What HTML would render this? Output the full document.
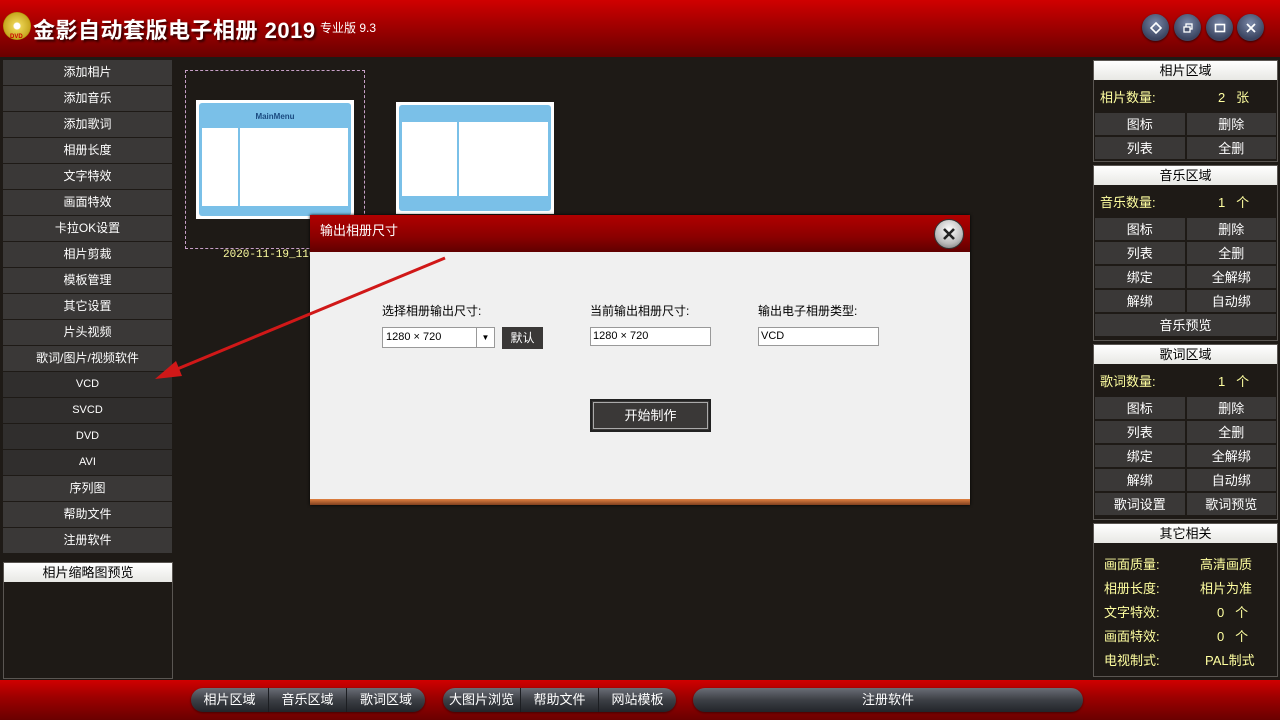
<!DOCTYPE html>
<html><head><meta charset="utf-8">
<style>
*{margin:0;padding:0;box-sizing:border-box}
body{width:1280px;height:720px;background:#1e1a16;position:relative;overflow:hidden;font-family:"Liberation Sans","Noto Sans CJK SC","WenQuanYi Zen Hei",sans-serif;font-size:13px;color:#fff}
.a{position:absolute}
#top{left:0;top:0;width:1280px;height:57px;background:linear-gradient(#d00000 0%,#a60000 40%,#6a0000 100%)}
.tb{width:27px;height:27px;border-radius:50%;background:radial-gradient(circle at 50% 35%,#7a88a8,#3a4460 70%);top:14px;box-shadow:0 1px 2px #300;display:flex;align-items:center;justify-content:center}
.menu{left:3px;width:169px;height:25px;background:#3a3837;text-align:center;line-height:25px;font-size:12px}
.menu.d{background:#302e2d}
.sec{left:1093px;width:185px;border:1px solid #5a5652}
.hd{height:19px;background:linear-gradient(#fff,#e8e8e4);color:#000;text-align:center;line-height:19px;font-size:13px}
.row{height:24px;display:flex}
.row div{flex:1;background:#3a3837;text-align:center;line-height:23px;border:1px solid #1e1a16}
.cnt{color:#ffffa0;height:24px;line-height:24px;position:relative}
.y{color:#ffffa0}
.bb{top:688px;height:24px;border-radius:12px;background:linear-gradient(#6a6e76,#3c3f45 50%,#22252a);display:flex;box-shadow:0 1px 2px #400}
.bb div{text-align:center;line-height:24px;border-right:1px solid #1c1e22;font-size:13px}
.bb div:last-child{border-right:none}
</style></head><body>
<div id="top" class="a"></div>
<div class="a" style="left:3px;top:12px;width:28px;height:28px;border-radius:50%;background:radial-gradient(circle,#fff 0 3px,#e8d050 4px,#c8a820 13px,#a88800 14px)"></div>
<div class="a" style="left:10px;top:34px;font-size:6px;color:#c00;font-weight:bold">DVD</div>
<div class="a" style="left:33px;top:13px;font-size:22px;font-weight:bold;color:#fff;text-shadow:2px 2px 2px #300;letter-spacing:0.5px">金影自动套版电子相册 2019</div>
<div class="a" style="left:320px;top:19px;font-size:12px;color:#fff">专业版 9.3</div>
<div class="a tb" style="left:1142px"><svg width="14" height="14"><path d="M7 2L12 7L7 12L2 7Z" fill="none" stroke="#fff" stroke-width="1.6"/></svg></div>
<div class="a tb" style="left:1174px"><svg width="14" height="14"><rect x="5" y="3" width="6" height="5" fill="none" stroke="#fff" stroke-width="1.3"/><rect x="3" y="6" width="6" height="5" fill="#4a5470" stroke="#fff" stroke-width="1.3"/></svg></div>
<div class="a tb" style="left:1206px"><svg width="14" height="14"><rect x="2.5" y="3.5" width="9" height="7" fill="none" stroke="#fff" stroke-width="1.6"/></svg></div>
<div class="a tb" style="left:1237px"><svg width="14" height="14"><path d="M3 3L11 11M11 3L3 11" stroke="#fff" stroke-width="1.8"/></svg></div>

<div class="a menu" style="top:60px">添加相片</div>
<div class="a menu" style="top:86px">添加音乐</div>
<div class="a menu" style="top:112px">添加歌词</div>
<div class="a menu" style="top:138px">相册长度</div>
<div class="a menu" style="top:164px">文字特效</div>
<div class="a menu" style="top:190px">画面特效</div>
<div class="a menu" style="top:216px">卡拉OK设置</div>
<div class="a menu" style="top:242px">相片剪裁</div>
<div class="a menu" style="top:268px">模板管理</div>
<div class="a menu" style="top:294px">其它设置</div>
<div class="a menu" style="top:320px">片头视频</div>
<div class="a menu" style="top:346px">歌词/图片/视频软件</div>
<div class="a menu d" style="top:372px;font-size:11px">VCD</div>
<div class="a menu d" style="top:398px;font-size:11px">SVCD</div>
<div class="a menu d" style="top:424px;font-size:11px">DVD</div>
<div class="a menu d" style="top:450px;font-size:11px">AVI</div>
<div class="a menu" style="top:476px">序列图</div>
<div class="a menu" style="top:502px">帮助文件</div>
<div class="a menu" style="top:528px">注册软件</div>
<div class="a" style="left:3px;top:562px;width:170px;height:117px;border:1px solid #5a5652">
<div class="hd">相片缩略图预览</div></div>

<div class="a" style="left:185px;top:70px;width:180px;height:179px;border:1px dashed #c8a0c8"></div>
<div class="a" style="left:196px;top:100px;width:158px;height:119px;background:#fff;padding:3px">
 <div style="width:100%;height:100%;background:#7ac0e8;border-radius:3px;padding:3px">
  <div style="height:22px;color:#1a4a80;font-size:8px;font-weight:bold;text-align:center;line-height:22px">MainMenu</div>
  <div style="display:flex;height:78px;gap:2px"><div style="width:36px;background:#fff"></div><div style="flex:1;background:#fff"></div></div>
 </div></div>
<div class="a" style="left:396px;top:102px;width:158px;height:112px;background:#fff;padding:3px">
 <div style="width:100%;height:100%;background:#7ac0e8;border-radius:3px;padding:3px">
  <div style="height:14px"></div>
  <div style="display:flex;height:74px;gap:2px"><div style="width:55px;background:#fff"></div><div style="flex:1;background:#fff"></div></div>
 </div></div>
<div class="a y" style="left:223px;top:249px;font-size:11px;font-family:'Liberation Mono',monospace">2020-11-19_1108</div>

<div class="a" style="left:310px;top:215px;width:660px;height:290px;background:#f0f0f0;box-shadow:0 0 3px #000">
 <div style="height:37px;background:linear-gradient(#b00000,#8a0000 60%,#600000);padding-left:10px;line-height:32px;font-size:13px">输出相册尺寸</div>
 <div class="a" style="left:624px;top:4px;width:30px;height:30px;border-radius:50%;background:radial-gradient(circle at 50% 35%,#fff,#bbb 60%,#666);border:1px solid #333;display:flex;align-items:center;justify-content:center"><svg width="16" height="16"><path d="M3 3L13 13M13 3L3 13" stroke="#222" stroke-width="2.6"/></svg></div>
 <div class="a" style="left:0;bottom:0;width:660px;height:6px;background:linear-gradient(#e08040,#804020)"></div>
 <div class="a" style="left:72px;top:87px;color:#000;font-size:12px">选择相册输出尺寸:</div>
 <div class="a" style="left:280px;top:87px;color:#000;font-size:12px">当前输出相册尺寸:</div>
 <div class="a" style="left:448px;top:87px;color:#000;font-size:12px">输出电子相册类型:</div>
 <div class="a" style="left:72px;top:112px;width:113px;height:21px;background:#fff;border:1px solid #999;color:#000;font-size:11px;line-height:19px;padding-left:3px">1280 × 720<div class="a" style="right:0;top:0;width:18px;height:19px;border-left:1px solid #999;text-align:center;font-size:8px">▼</div></div>
 <div class="a" style="left:192px;top:112px;width:41px;height:22px;background:#3a3837;color:#fff;text-align:center;line-height:22px;font-size:12px">默认</div>
 <div class="a" style="left:280px;top:112px;width:121px;height:19px;background:#fff;border:1px solid #999;color:#000;font-size:11px;line-height:17px;padding-left:2px">1280 × 720</div>
 <div class="a" style="left:448px;top:112px;width:121px;height:19px;background:#fff;border:1px solid #999;color:#000;font-size:11px;line-height:17px;padding-left:2px">VCD</div>
 <div class="a" style="left:280px;top:184px;width:121px;height:33px;background:#3a3837;border:2px solid #222;outline:1px solid #aaa;outline-offset:-4px;text-align:center;line-height:29px;font-size:13px">开始制作</div>
</div>
<svg class="a" style="left:0;top:0" width="1280" height="720"><path d="M445 258L170 372" stroke="#d01818" stroke-width="3"/><path d="M155 379L176 361L182 376Z" fill="#d01818"/></svg>

<div class="a sec" style="top:60px;height:102px"><div class="hd">相片区域</div>
<div class="cnt" style="margin-top:6px"><span class="a" style="left:6px">相片数量:</span><span class="a" style="left:124px">2&nbsp;&nbsp;&nbsp;张</span></div>
<div class="row" style="margin-top:2px"><div>图标</div><div>删除</div></div>
<div class="row"><div>列表</div><div>全删</div></div></div>

<div class="a sec" style="top:165px;height:176px"><div class="hd">音乐区域</div>
<div class="cnt" style="margin-top:6px"><span class="a" style="left:6px">音乐数量:</span><span class="a" style="left:124px">1&nbsp;&nbsp;&nbsp;个</span></div>
<div class="row" style="margin-top:2px"><div>图标</div><div>删除</div></div>
<div class="row"><div>列表</div><div>全删</div></div>
<div class="row"><div>绑定</div><div>全解绑</div></div>
<div class="row"><div>解绑</div><div>自动绑</div></div>
<div class="row"><div>音乐预览</div></div></div>

<div class="a sec" style="top:344px;height:176px"><div class="hd">歌词区域</div>
<div class="cnt" style="margin-top:6px"><span class="a" style="left:6px">歌词数量:</span><span class="a" style="left:124px">1&nbsp;&nbsp;&nbsp;个</span></div>
<div class="row" style="margin-top:2px"><div>图标</div><div>删除</div></div>
<div class="row"><div>列表</div><div>全删</div></div>
<div class="row"><div>绑定</div><div>全解绑</div></div>
<div class="row"><div>解绑</div><div>自动绑</div></div>
<div class="row"><div>歌词设置</div><div>歌词预览</div></div></div>

<div class="a sec" style="top:523px;height:154px"><div class="hd">其它相关</div>
<div class="a y" style="left:10px;top:30px">画面质量:</div><div class="a y" style="left:106px;top:30px">高清画质</div>
<div class="a y" style="left:10px;top:54px">相册长度:</div><div class="a y" style="left:106px;top:54px">相片为准</div>
<div class="a y" style="left:10px;top:78px">文字特效:</div><div class="a y" style="left:123px;top:78px">0&nbsp;&nbsp;&nbsp;个</div>
<div class="a y" style="left:10px;top:102px">画面特效:</div><div class="a y" style="left:123px;top:102px">0&nbsp;&nbsp;&nbsp;个</div>
<div class="a y" style="left:10px;top:126px">电视制式:</div><div class="a y" style="left:111px;top:126px">PAL制式</div>
</div>

<div class="a" style="left:0;top:680px;width:1280px;height:40px;background:linear-gradient(#d00000,#a00000 40%,#6a0000)"></div>
<div class="a bb" style="left:191px;width:234px"><div style="width:78px">相片区域</div><div style="width:78px">音乐区域</div><div style="width:78px">歌词区域</div></div>
<div class="a bb" style="left:443px;width:233px"><div style="width:78px">大图片浏览</div><div style="width:78px">帮助文件</div><div style="width:77px">网站模板</div></div>
<div class="a bb" style="left:693px;width:390px"><div style="width:390px">注册软件</div></div>
</body></html>
